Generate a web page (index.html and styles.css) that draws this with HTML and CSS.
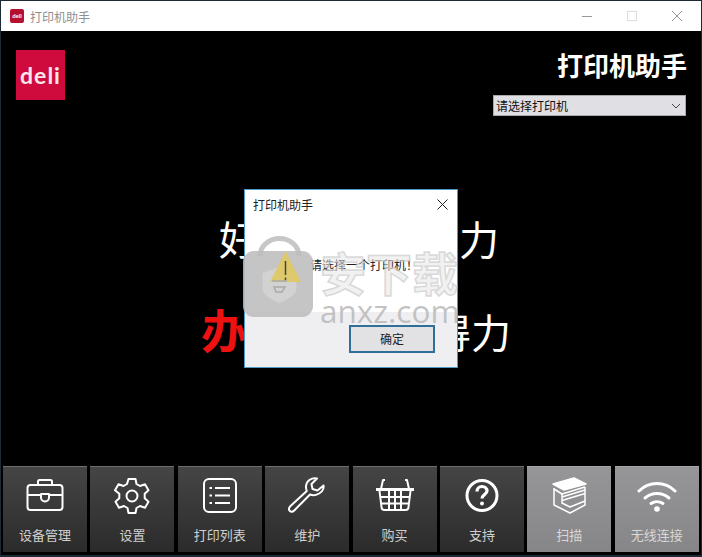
FILE: index.html
```html
<!DOCTYPE html>
<html lang="zh">

<head>
  <meta charset="utf-8">
  <title>打印机助手</title>
  <link rel="stylesheet" href="styles.css">
</head>

<body>
  <div class="window">
    <div class="titlebar">
      <span class="app-icon">deli</span>
      <span class="app-name">打印机助手</span>
      <div class="win-controls">
        <svg width="12" height="12" viewBox="0 0 12 12"><path d="M1 6.500h10" stroke="#999" /></svg>
        <svg width="12" height="12" viewBox="0 0 12 12"><rect x="1.500" y="1.500" width="9" height="9" fill="none" stroke="#ddd" /></svg>
        <svg width="12" height="12" viewBox="0 0 12 12"><path d="M1 1l10 10M11 1L1 11" stroke="#999" /></svg>
      </div>
    </div>

    <div class="main">
      <div class="header">
        <div class="logo">deli</div>
        <div class="header-right">
          <h1 class="app-title">打印机助手</h1>
          <div class="printer-select">
            <span>请选择打印机</span>
            <svg width="10" height="6" viewBox="0 0 10 6"><path d="M1 1l4 4 4-4" fill="none" stroke="#444" /></svg>
          </div>
        </div>
      </div>

      <div class="slogans">
        <div class="slogan slogan-first">好打印，更得力</div>
        <div class="slogan slogan-second"><b>办公</b>打好印得力</div>
      </div>

      <div class="toolbar">
        <div class="tool">
          <svg width="40" height="40" viewBox="0 0 40 40" fill="none" stroke="#fff" stroke-width="2" stroke-linejoin="round">
            <rect x="2.500" y="9" width="35" height="25" rx="3" />
            <path d="M13 9V5.500a1.500 1.500 0 0 1 1.500-1.500h11A1.500 1.500 0 0 1 27 5.500V9" />
            <path d="M2.500 19H16M24 19h13.500" />
            <path d="M16 18h8v3.500a4 4 0 0 1-8 0z" />
          </svg>
          <span>设备管理</span>
        </div>
        <div class="tool">
          <svg width="40" height="40" viewBox="0 0 40 40" fill="none" stroke="#fff" stroke-width="2" stroke-linejoin="round">
            <path d="M16.500 3h7l1 5 3.500 2 5-1.700 3.500 6-3.800 3.400v4.600l3.800 3.400-3.500 6-5-1.700-3.500 2-1 5h-7l-1-5-3.500-2-5 1.700-3.500-6 3.800-3.400v-4.600L3 14.300l3.500-6 5 1.700 3.500-2z" />
            <circle cx="20" cy="20" r="5.500" />
          </svg>
          <span>设置</span>
        </div>
        <div class="tool">
          <svg width="40" height="40" viewBox="0 0 40 40" fill="none" stroke="#fff" stroke-width="2">
            <rect x="4" y="3" width="32" height="33" rx="5" />
            <path d="M15 12h15M15 19.500h15M15 27h15M9.500 12h2.500M9.500 19.500h2.500M9.500 27h2.500" />
          </svg>
          <span>打印列表</span>
        </div>
        <div class="tool">
          <svg width="40" height="40" viewBox="0 0 40 40" fill="none" stroke="#fff" stroke-width="2" stroke-linejoin="round">
            <path d="M36.500 9.500l-6 5-5-1.500-1-5 5.500-5.500c-5-1.200-10.500 2-11 7.500-.2 2 .2 3.500.8 5L3.500 30c-2 2-2 3.500-.8 4.800 1.300 1.300 3 1.200 4.800-.6L23 18.500c2 .8 4 1 6 .4 5-1.500 8.300-5.200 7.500-9.400z" />
          </svg>
          <span>维护</span>
        </div>
        <div class="tool">
          <svg width="40" height="40" viewBox="0 0 40 40" fill="none" stroke="#fff" stroke-width="2" stroke-linejoin="round">
            <path d="M10 4H8l-2 9M30 4h2l2 9" />
            <path d="M1 13.500h38" stroke-width="3" />
            <path d="M4.500 15l2 16a3 3 0 0 0 3 3h21a3 3 0 0 0 3-3l2-16" />
            <path d="M5.500 21h29M6.500 27.500h27M14 15v19M20 15v19M26 15v19" />
          </svg>
          <span>购买</span>
        </div>
        <div class="tool">
          <svg width="40" height="40" viewBox="0 0 40 40" fill="none" stroke="#fff">
            <circle cx="20" cy="19.500" r="15" stroke-width="3" />
            <path d="M15 15.500c0-3 2.300-5 5-5s5 1.800 5 4.500c0 3.300-5 3.800-5 7.500" stroke-width="3.200" />
            <circle cx="20" cy="27.500" r="2" fill="#fff" stroke="none" />
          </svg>
          <span>支持</span>
        </div>
        <div class="tool tool-light">
          <svg width="40" height="40" viewBox="0 0 40 40" fill="none" stroke="#fff" stroke-width="1.500" stroke-linejoin="round">
            <path d="M4 8L25 2l12 6-22 6z" fill="#fff" />
            <path d="M5 12v17l16 8 15-8V11" />
            <path d="M5 13l8 5 23-7" />
            <path d="M13 21l23-7M13 24.500l23-7M13 18v9l8 4 15-6" />
          </svg>
          <span>扫描</span>
        </div>
        <div class="tool tool-light">
          <svg width="40" height="40" viewBox="0 0 40 40" fill="none" stroke="#fff" stroke-width="3" stroke-linecap="round">
            <path d="M2 15c10-10 26-10 36 0" />
            <path d="M8 22c7-6 17-6 24 0" />
            <path d="M14 27.500c3.500-2.500 8.500-2.500 12 0" />
            <circle cx="20" cy="33" r="2.800" fill="#fff" stroke="none" />
          </svg>
          <span>无线连接</span>
        </div>
      </div>
    </div>

    <!-- message box -->
    <div class="dialog">
      <div class="dialog-title">
        <span>打印机助手</span>
        <svg width="11" height="11" viewBox="0 0 11 11"><path d="M.5.500l10 10M10.500.500l-10 10" stroke="#222" /></svg>
      </div>
      <div class="dialog-body">
        <span>请选择一个打印机！</span>
      </div>
      <div class="dialog-footer">
        <div class="dialog-btn">确定</div>
      </div>
    </div>

    <!-- site watermark on top of the message box -->
    <div class="watermark">
      <svg class="wm-lock" width="72" height="84" viewBox="0 0 72 84">
        <path d="M17 22A19 17 0 0 1 56 22" fill="none" stroke="#bdbdbd" stroke-width="5" opacity=".85" />
        <rect x="0" y="17" width="70" height="66" rx="11" fill="#bdbdbd" opacity=".88" />
        <path d="M36.500 33l17 6v15c0 7-8 11-17 15-9-4-17-8-17-15V39z" fill="#d2d2d2" />
        <path d="M42.500 17L58 48H27z" fill="#e0c95a" opacity=".85" />
        <path d="M42.500 27v14M42.500 43.500v3" stroke="#444" stroke-width="1.500" />
        <path d="M29 47h15M31 53h11l-3 5h-6z" fill="none" stroke="#aaa" stroke-width="1.500" />
      </svg>
      <div class="wm-text">
        <div class="wm-cn">安下载</div>
        <div class="wm-en">anxz.com</div>
      </div>
    </div>
  </div>
</body>

</html>
```

FILE: styles.css
```css
* {
  box-sizing: border-box;
}

html,
body {
  margin: 0;
  height: 100%;
  background: #1b2a36;
  overflow: hidden;
}

body {
  font-family: "Noto Sans CJK SC", "Liberation Sans", sans-serif;
}

.window {
  position: relative;
  width: 702px;
  height: 557px;
  padding: 1px 1px 2px;
  display: flex;
  flex-direction: column;
}

.titlebar {
  height: 30px;
  background: #fff;
  display: flex;
  align-items: center;
  padding-left: 9px;
  flex-shrink: 0;
}

.app-icon {
  width: 14px;
  height: 14px;
  background: #b5112f;
  border-radius: 2px;
  color: #fff;
  font: bold 6px "Lato", sans-serif;
  line-height: 14px;
  text-align: center;
}

.app-name {
  margin-left: 6px;
  font-size: 12px;
  color: #8f8f8f;
}

.win-controls {
  margin-left: auto;
  margin-right: 18px;
  display: flex;
  gap: 33px;
}

.main {
  flex: 1;
  background: #000;
  display: flex;
  flex-direction: column;
}

.header {
  display: flex;
  justify-content: space-between;
  padding: 19px 15px 0;
}

.logo {
  width: 49px;
  height: 50px;
  background: #cf0a3c;
  color: #f8e6ea;
  font: bold 23px/50px "Lato", sans-serif;
  letter-spacing: 1px;
  text-align: center;
}

.header-right {
  display: flex;
  flex-direction: column;
  align-items: flex-end;
}

.app-title {
  margin: 0 -1px 0 0;
  font-size: 26px;
  line-height: 30px;
  font-weight: bold;
  color: #fff;
}

.printer-select {
  margin-top: 15px;
  width: 193px;
  height: 21px;
  background: #e0dfe3;
  border: 1px solid #a9a9a9;
  display: flex;
  align-items: center;
  justify-content: space-between;
  padding: 0 4px 0 2px;
  font-size: 12px;
  color: #111;
}

.slogans {
  padding-top: 94px;
  display: flex;
  flex-direction: column;
}

.slogan {
  color: #fff;
  font-size: 40px;
  line-height: 56px;
  white-space: nowrap;
}

.slogan-first {
  margin-left: 218px;
}

.slogan-second {
  margin-left: 200px;
  margin-top: 34px;
}

.slogan-second b {
  color: #ee1111;
  font-size: 46px;
  font-weight: bold;
  letter-spacing: 9px;
}

.toolbar {
  margin-top: auto;
  margin-bottom: 3px;
  display: grid;
  grid-template-columns: repeat(8, 84px);
  column-gap: 3.400px;
  padding: 0 2px;
}

.tool {
  height: 86px;
  background: linear-gradient(#464545, #2c2b2b);
  border-top: 1px solid #6e6e6e;
  display: flex;
  flex-direction: column;
  align-items: center;
  padding-top: 9px;
  color: #cfcfcf;
  font-size: 13px;
}

.tool span {
  margin-top: 9px;
  line-height: 20px;
}

.tool-light {
  background: linear-gradient(#969597, #868587);
  border-top-color: #a5a5a5;
  color: #d8d8d8;
}

.dialog {
  position: absolute;
  left: 244px;
  top: 189px;
  width: 214px;
  height: 179px;
  background: #fff;
  border: 1px solid #4d9ac6;
  display: flex;
  flex-direction: column;
  font-size: 12px;
  color: #222;
}

.dialog-title {
  height: 28px;
  display: flex;
  align-items: center;
  justify-content: space-between;
  padding: 0 9px 0 8px;
}

.dialog-body {
  flex: 1;
  padding: 38px 0 0 65px;
}

.dialog-footer {
  height: 55px;
  background: #efeef1;
  padding: 13px 22px 0 0;
  display: flex;
  justify-content: flex-end;
  align-items: flex-start;
}

.dialog-btn {
  width: 86px;
  height: 28px;
  border: 2px solid #2f6f98;
  background: #e2e2e5;
  text-align: center;
  line-height: 24px;
}

.watermark {
  position: absolute;
  left: 243px;
  top: 234px;
  display: flex;
  pointer-events: none;
}

.wm-text {
  margin-left: 5px;
  margin-top: 12px;
}

.wm-cn {
  font-size: 46px;
  line-height: 50px;
  font-weight: bold;
  color: rgba(228, 228, 228, 0.5);
  -webkit-text-stroke: 1.500px rgba(200, 200, 200, 0.65);
}

.wm-en {
  font-family: "Open Sans", sans-serif;
  font-size: 31.500px;
  line-height: 30px;
  color: rgba(185, 185, 185, 0.85);
}
```
